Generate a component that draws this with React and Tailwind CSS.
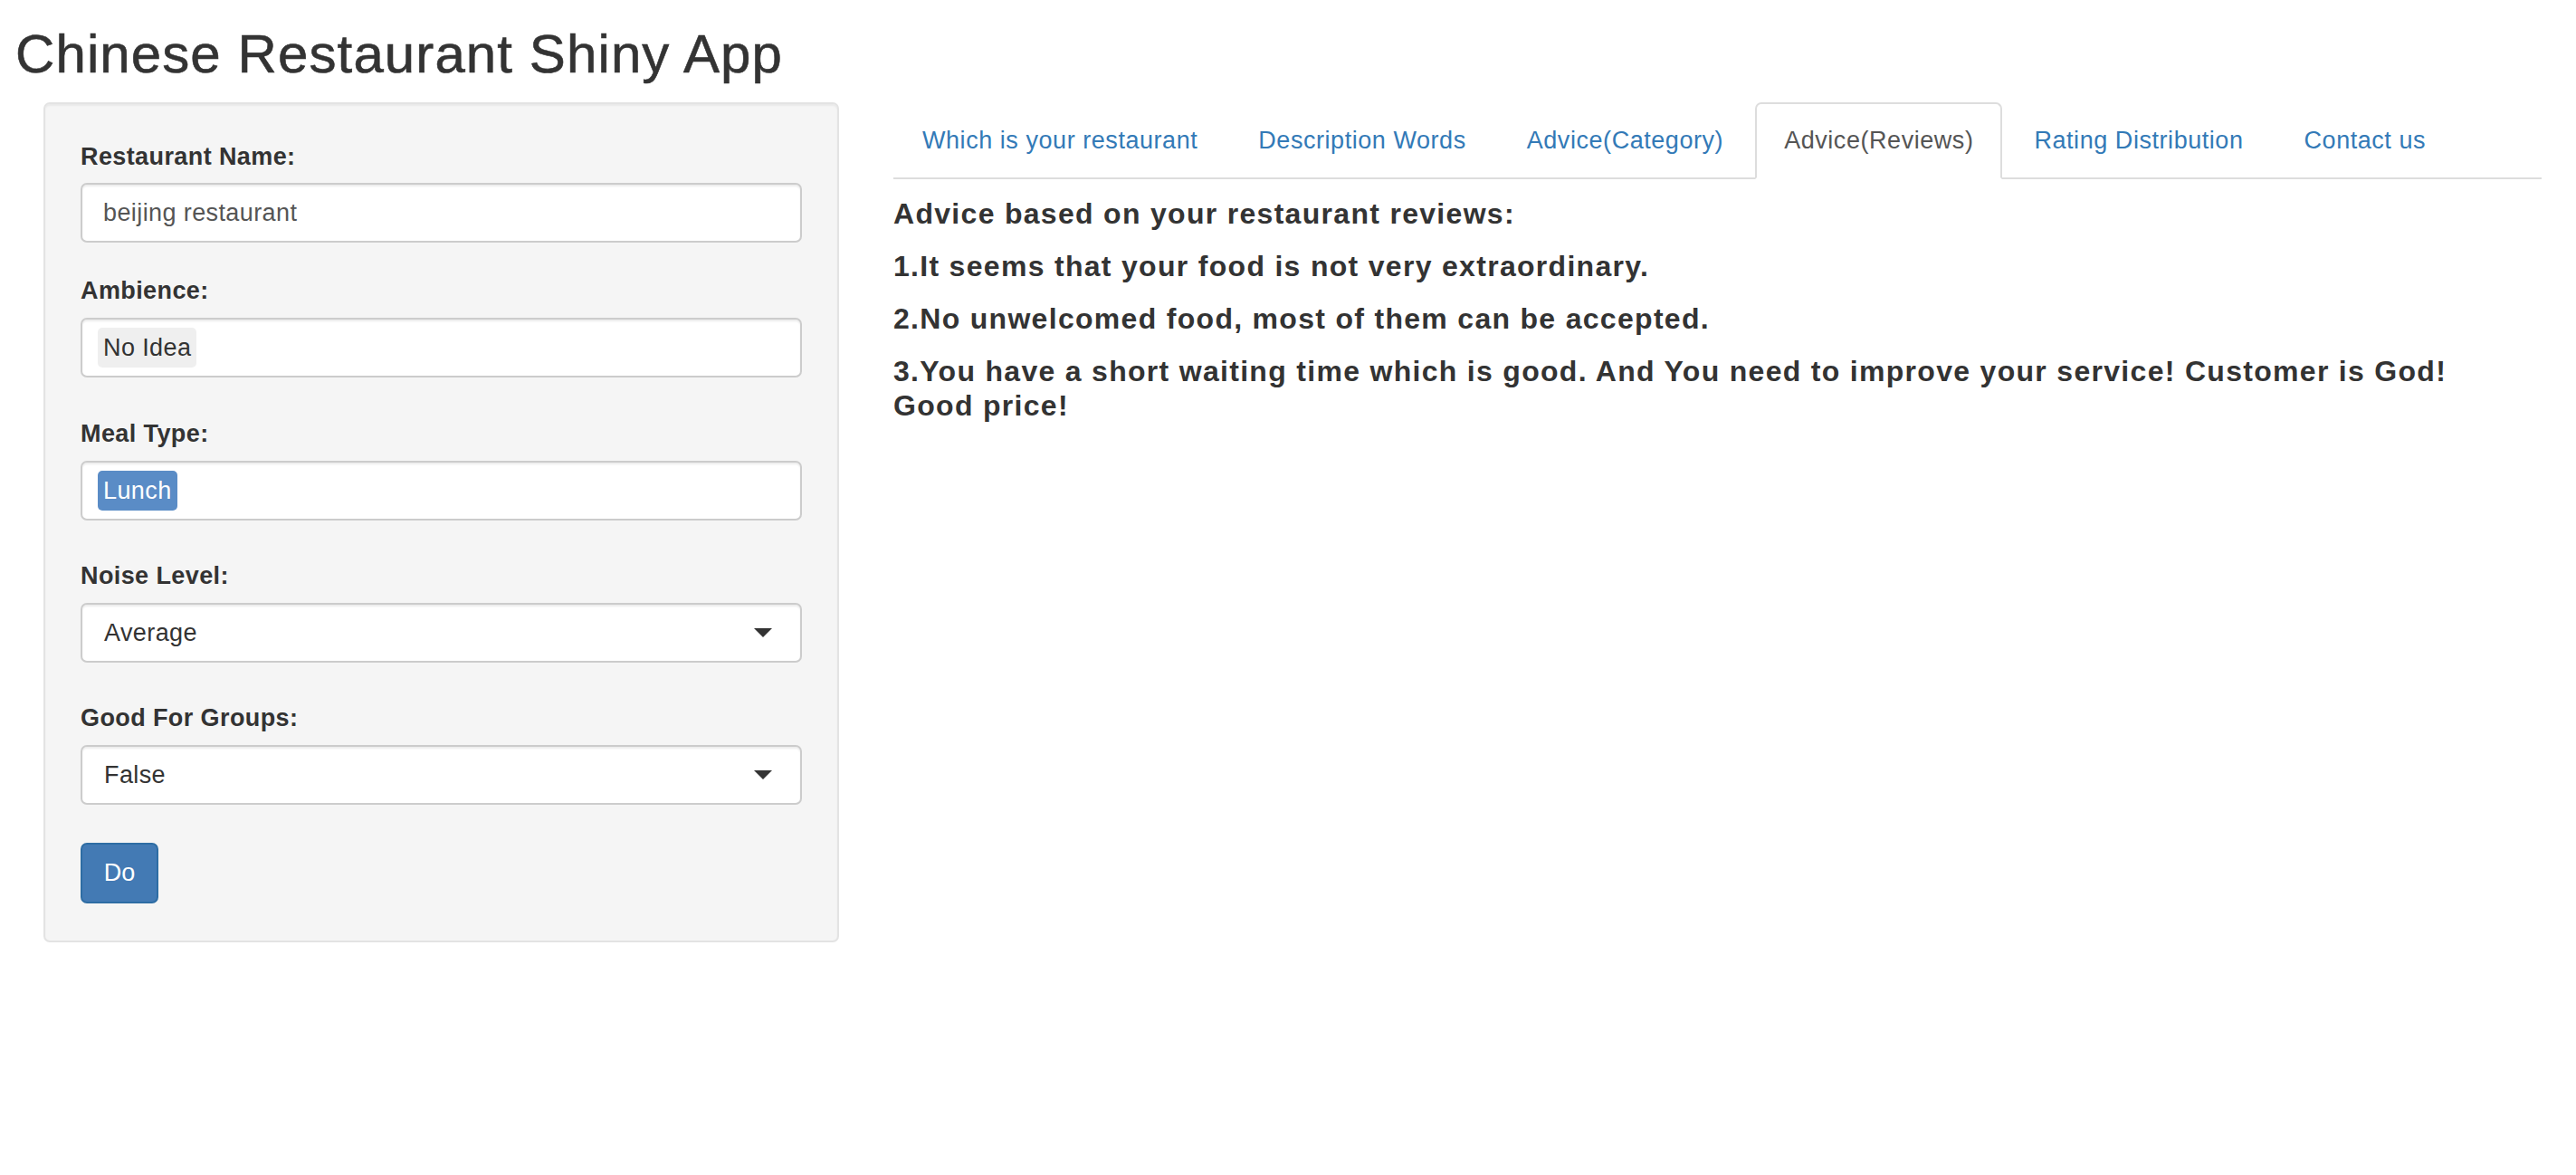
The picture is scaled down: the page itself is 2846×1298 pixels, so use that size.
const labelCls = "block text-[27px] leading-[38px] font-bold tracking-[0.4px] text-[#333]";
const boxCls =
  "h-[66px] w-full bg-white border-2 border-[#ccc] rounded-[7px] shadow-[inset_0_2px_2px_rgba(0,0,0,0.075)]";

function Caret() {
  return (
    <svg width="20" height="10" viewBox="0 0 20 10" className="mr-[31px]">
      <polygon points="0,0 20,0 10,10" fill="#333" />
    </svg>
  );
}

function SelectBox({ value }) {
  return (
    <div className={`${boxCls} flex items-center justify-between`}>
      <span className="pl-[24px] text-[27px] tracking-[0.4px] text-[#333]">{value}</span>
      <Caret />
    </div>
  );
}

function ChipBox({ value, active }) {
  return (
    <div className={`${boxCls} flex items-center pl-[17px]`}>
      <span
        className={`h-[44px] flex items-center px-[6px] rounded-[5px] text-[27px] tracking-[0.4px] ${
          active ? "bg-[#5a8cc6] text-white" : "bg-[#efefef] text-[#333]"
        }`}
      >
        {value}
      </span>
    </div>
  );
}

const tabs = [
  "Which is your restaurant",
  "Description Words",
  "Advice(Category)",
  "Advice(Reviews)",
  "Rating Distribution",
  "Contact us",
];

const advice = [
  "Advice based on your restaurant reviews:",
  "1.It seems that your food is not very extraordinary.",
  "2.No unwelcomed food, most of them can be accepted.",
  "3.You have a short waiting time which is good. And You need to improve your service! Customer is God! Good price!",
];

export default function App() {
  return (
    <div
      className="w-[2846px] min-h-[1298px] bg-white text-[#333]"
      style={{ fontFamily: '"Liberation Sans", Arial, sans-serif' }}
    >
      {/* Title */}
      <h2 className="pt-[27px] pl-[17px] text-[60px] leading-[66px] font-normal tracking-[1.1px] [-webkit-text-stroke:0.6px_#333]">
        Chinese Restaurant Shiny App
      </h2>

      <div className="flex mt-[20px]">
        {/* Sidebar */}
        <div className="ml-[48px] w-[879px] shrink-0">
          <div className="bg-[#f5f5f5] border-2 border-[#e3e3e3] rounded-[7px] shadow-[inset_0_2px_2px_rgba(0,0,0,0.05)] px-[39px] pt-[39px] pb-[41px]">
            <div className="mb-[34px]">
              <label className={`${labelCls} mb-[10px]`}>Restaurant Name:</label>
              <div className={`${boxCls} flex items-center`}>
                <span className="pl-[23px] text-[27px] tracking-[0.4px] text-[#555]">beijing restaurant</span>
              </div>
            </div>

            <div className="mb-[43px]">
              <label className={`${labelCls} mb-[11px]`}>Ambience:</label>
              <ChipBox value="No Idea" />
            </div>

            <div className="mb-[42px]">
              <label className={`${labelCls} mb-[11px]`}>Meal Type:</label>
              <ChipBox value="Lunch" active />
            </div>

            <div className="mb-[42px]">
              <label className={`${labelCls} mb-[11px]`}>Noise Level:</label>
              <SelectBox value="Average" />
            </div>

            <div className="mb-[42px]">
              <label className={`${labelCls} mb-[11px]`}>Good For Groups:</label>
              <SelectBox value="False" />
            </div>

            <button className="h-[67px] w-[86px] bg-[#437ab4] border-2 border-[#2e6da4] rounded-[7px] text-white text-[27px]">
              Do
            </button>
          </div>
        </div>

        {/* Main panel */}
        <div className="ml-[60px] w-[1821px] shrink-0">
          <ul className="flex border-b-2 border-[#ddd]">
            {tabs.map((t) => {
              const active = t === "Advice(Reviews)";
              return (
                <li key={t} className="-mb-[2px] mr-[3px]">
                  <span
                    className={`block px-[30px] pt-[21px] pb-[22px] text-[27px] leading-[38px] tracking-[0.55px] rounded-t-[7px] border-2 ${
                      active
                        ? "border-[#ddd] border-b-white bg-white text-[#555]"
                        : "border-transparent text-[#337ab7]"
                    }`}
                  >
                    {t}
                  </span>
                </li>
              );
            })}
          </ul>

          <div className="pt-[19px] flex flex-col gap-[20px] max-w-[1770px]">
            {advice.map((a) => (
              <h4 key={a} className="text-[32px] leading-[38px] font-bold tracking-[1.3px]">
                {a}
              </h4>
            ))}
          </div>
        </div>
      </div>
    </div>
  );
}
